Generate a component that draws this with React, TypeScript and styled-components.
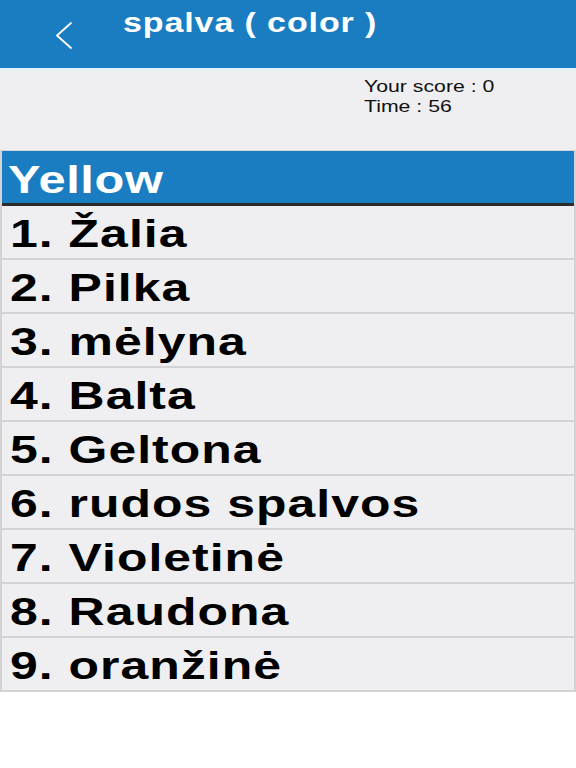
import styled, { createGlobalStyle } from "styled-components";

const GlobalStyle = createGlobalStyle`
  html, body {
    margin: 0;
    padding: 0;
    background: #ffffff;
    font-family: "Liberation Sans", Arial, sans-serif;
    overflow-x: hidden;
  }
`;

const BLUE = "#1a7dc1";

const Page = styled.div`
  width: 576px;
  min-height: 768px;
  background: #ffffff;
  overflow: hidden;
`;

const Header = styled.header`
  height: 68px;
  background: ${BLUE};
  border-bottom: 2px solid #dff2f9;
  display: flex;
  align-items: flex-start;
`;

const BackButton = styled.button`
  width: 70px;
  height: 56px;
  margin-left: 40px;
  padding: 21px 0 0 14px;
  border: none;
  background: transparent;
  display: flex;
  align-items: flex-start;
  cursor: pointer;
`;

const Title = styled.h1`
  margin: 8px 0 0 13px;
  color: #ffffff;
  font-size: 27px;
  font-weight: 700;
  letter-spacing: 0.7px;
  width: fit-content;
  transform: scaleX(1.26);
  transform-origin: left center;
`;

const ScoreArea = styled.section`
  height: 80px;
  background: #efeff1;
  padding: 7px 0 0 364px;
  box-sizing: border-box;
`;

const ScoreLine = styled.div`
  font-size: 17px;
  line-height: 20px;
  color: #111111;
  width: fit-content;
  transform: scaleX(1.25);
  transform-origin: left center;
`;

const List = styled.section`
  border-left: 2px solid #d3d3d5;
  border-right: 2px solid #d3d3d5;
  border-top: 1px solid #d6d6d8;
  background: #efeff1;
`;

const WordBar = styled.div`
  height: 52px;
  background: ${BLUE};
  border-bottom: 3px solid #2c2c2c;
  display: flex;
  align-items: center;
  padding-left: 6px;
`;

const Word = styled.span`
  display: inline-block;
  color: #ffffff;
  font-size: 39px;
  font-weight: 700;
  letter-spacing: 0.5px;
  margin-top: 6px;
  transform: scaleX(1.25);
  transform-origin: left center;
`;

const Row = styled.div`
  height: 52px;
  border-bottom: 2px solid #d3d3d5;
  display: flex;
  align-items: center;
  padding-left: 8px;
  cursor: pointer;
`;

const Option = styled.span`
  display: inline-block;
  color: #000000;
  font-size: 39px;
  font-weight: 700;
  letter-spacing: 0.8px;
  margin-top: 3px;
  white-space: pre;
  transform: scaleX(1.28);
  transform-origin: left center;
`;

const options = [
  "Žalia",
  "Pilka",
  "mėlyna",
  "Balta",
  "Geltona",
  "rudos spalvos",
  "Violetinė",
  "Raudona",
  "oranžinė",
];

export default function App() {
  return (
    <Page>
      <GlobalStyle />
      <Header>
        <BackButton aria-label="back">
          <svg width="20" height="30" viewBox="0 0 20 30" fill="none">
            <path d="M17 2 L3 14.5 L17 27" stroke="#ffffff" strokeWidth="1.8" strokeLinecap="round" strokeLinejoin="round" />
          </svg>
        </BackButton>
        <Title>spalva ( color )</Title>
      </Header>

      <ScoreArea>
        <ScoreLine>Your score : 0</ScoreLine>
        <ScoreLine>Time : 56</ScoreLine>
      </ScoreArea>

      <List>
        <WordBar>
          <Word>Yellow</Word>
        </WordBar>
        {options.map((text, i) => (
          <Row key={text}>
            <Option>{`${i + 1}. ${text}`}</Option>
          </Row>
        ))}
      </List>
    </Page>
  );
}
